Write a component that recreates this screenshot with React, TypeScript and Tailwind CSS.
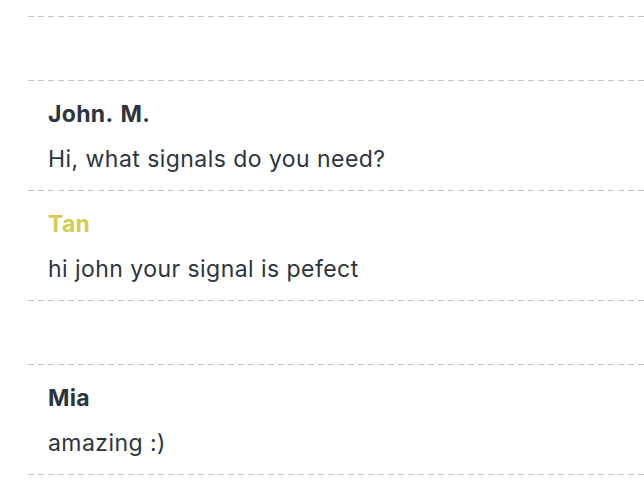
import React from "react";

const Dash = () => (
  <div className="ml-[28px] h-px bg-[repeating-linear-gradient(to_right,#c4c4c4_0px,#c4c4c4_6px,transparent_6px,transparent_10px)]" />
);

type Msg = { name: string; text: string; color: string } | null;

const rows: Msg[] = [
  null,
  { name: "John. M.", text: "Hi, what signals do you need?", color: "text-[#2b353e]" },
  { name: "Tan", text: "hi john your signal is pefect", color: "text-[#d5cc52]" },
  null,
  { name: "Mia", text: "amazing :)", color: "text-[#2b353e]" },
];

export default function App() {
  return (
    <div className="w-[644px] h-[494px] bg-white pt-[16px] font-['Inter',sans-serif] text-[#2b353e] overflow-hidden">
      <Dash />
      {rows.map((r, i) => (
        <React.Fragment key={i}>
          {r ? (
            <div className="ml-[28px] pl-[20px] pt-[18px] pb-[16px] h-[109px]">
              <div className={`text-[23px] leading-[30px] font-bold tracking-[0.3px] [word-spacing:2px] ${r.color}`}>{r.name}</div>
              <div className="mt-[15px] text-[23px] tracking-[0.45px] leading-[30px]">{r.text}</div>
            </div>
          ) : (
            <div className="h-[63px]" />
          )}
          <Dash />
        </React.Fragment>
      ))}
    </div>
  );
}
